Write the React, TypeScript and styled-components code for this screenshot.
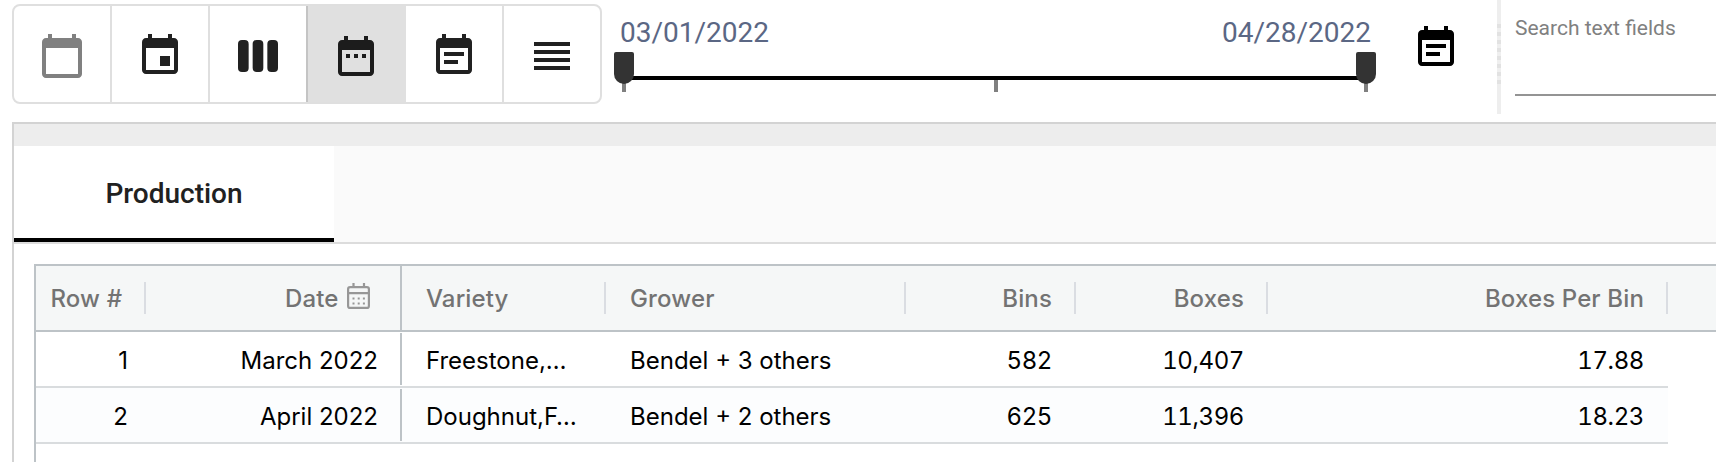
import React from "react";
import styled, { createGlobalStyle } from "styled-components";

const GlobalStyle = createGlobalStyle`
  * { box-sizing: border-box; }
  body { margin: 0; background: #fff; overflow: hidden; font-family: Roboto, sans-serif; }
`;

const Page = styled.div`
  width: 1716px;
  height: 462px;
  overflow: hidden;
  display: flex;
  flex-direction: column;
  padding-left: 12px;
`;

const Toolbar = styled.div`
  display: flex;
  flex: none;
  height: 122px;
`;

const ToggleGroup = styled.div`
  display: flex;
  width: 590px;
  height: 100px;
  margin-top: 4px;
  border: 2px solid #dfdfdf;
  border-radius: 8px;
`;

const Toggle = styled.button<{ $selected?: boolean; $muted?: boolean; $edge?: string }>`
  flex: none;
  width: 98px;
  height: 96px;
  padding: 26px 0 0 24px;
  border: 0;
  border-right: 2px solid ${(p) => p.$edge ?? "#dfdfdf"};
  background: ${(p) => (p.$selected ? "#e0e0e0" : "transparent")};
  color: ${(p) => (p.$selected ? "#1c1c1c" : p.$muted ? "#808080" : "#212121")};
  display: flex;
  align-items: flex-start;
  &:last-child { border-right: 0; width: 96px; }
`;

const Icon = styled.svg`
  width: 48px;
  height: 48px;
  flex: none;
  fill: currentColor;
`;

const RangePicker = styled.div`
  width: 742px;
  margin-left: 22px;
`;

const RangeLabels = styled.div`
  display: flex;
  justify-content: space-between;
  height: 52px;
  padding: 17px 0 0;
  margin: 0 -5px 0 -4px;
  font-size: 28px;
  line-height: 32px;
  color: #5b6784;
`;

const Slider = styled.div`
  position: relative;
  height: 40px;
`;

const Rail = styled.div`
  position: absolute;
  left: 0;
  right: 0;
  top: 24px;
  height: 4px;
  background: #000;
`;

const Tick = styled.div<{ $at: number }>`
  position: absolute;
  left: calc(${(p) => p.$at}% - 2px);
  top: 28px;
  width: 4px;
  height: 12px;
  background: #808080;
`;

const Thumb = styled.div<{ $at: number }>`
  position: absolute;
  left: calc(${(p) => p.$at}% - 10px);
  top: 0;
  width: 20px;
  height: 32px;
  border-radius: 2px 2px 10px 10px;
  background: #333;
`;

const CalendarButton = styled.button`
  margin: 24px 0 0 46.4px;
  padding: 0;
  border: 0;
  height: 48px;
  background: none;
  color: #000;
`;

const Gutter = styled.div`
  width: 4px;
  height: 114px;
  margin-left: 36.6px;
  padding-top: 24px;
  background: #eee;
`;

const GutterGrip = styled.div`
  height: 60px;
  background: repeating-linear-gradient(#e2e2e2 0 4px, #efefef 4px 8px);
`;

const SearchField = styled.label`
  flex: 1;
  height: 96px;
  margin-left: 14px;
  padding-top: 14px;
  border-bottom: 2px solid #949494;
  color: #808080;
  font-size: 21px;
  line-height: 28px;
`;

const Panel = styled.main`
  flex: 1;
  border: 2px solid #d3d3d3;
  border-width: 2px 0 0 2px;
`;

const PanelBar = styled.div`
  height: 22px;
  background: #ededed;
`;

const TabStrip = styled.div`
  display: flex;
  height: 98px;
  background: #fafafa;
  border-bottom: 2px solid #dcdcdc;
`;

const Tab = styled.div`
  width: 320px;
  border-bottom: 4px solid #000;
  background: #fff;
  color: #212121;
  font-size: 28px;
  font-weight: 500;
  line-height: 95px;
  text-align: center;
`;

const Grid = styled.div`
  height: 240px;
  margin: 20px 0 0 20px;
  border: 2px solid #bdc3c7;
  border-width: 2px 0 0 2px;
  font-family: Inter, sans-serif;
  font-size: 24px;
`;

const HeaderRow = styled.div`
  display: flex;
  height: 66px;
  border-bottom: 2px solid #bdc3c7;
  background: #f5f7f7;
  color: #737373;
  font-weight: 550;
  letter-spacing: 0.14px;
`;

const Row = styled.div<{ $odd?: boolean }>`
  display: flex;
  width: 1632px;
  height: 56px;
  border-bottom: 2px solid #d9dcde;
  background: ${(p) => (p.$odd ? "#fcfdfe" : "#fff")};
  color: #000;
`;

type CellProps = { $w: number; $right?: boolean; $pad?: number; $pinned?: boolean; $numeric?: boolean };

const Cell = styled.div<CellProps>`
  flex: none;
  display: flex;
  align-items: center;
  justify-content: ${(p) => (p.$right ? "flex-end" : "flex-start")};
  width: ${(p) => p.$w}px;
  margin: ${(p) => (p.$pinned ? "1px 0" : "0")};
  padding: 2px ${(p) => p.$pad ?? 22}px 0 24px;
  border-right: ${(p) => (p.$pinned ? "2px solid #bdc3c7" : "0")};
  font-variant-numeric: ${(p) => (p.$numeric ? "tabular-nums" : "normal")};
  letter-spacing: ${(p) => (p.$numeric ? "-0.4px" : "0")};
  white-space: nowrap;
`;

const HeaderCell = styled(Cell)<{ $left?: number }>`
  margin: 0;
  padding-top: 0;
  padding-left: ${(p) => p.$left ?? 24}px;
  letter-spacing: inherit;
`;

const Resizer = styled.span`
  flex: none;
  width: 2px;
  height: 32px;
  margin: 16px 0;
  background: #dadde2;
`;

const DateIcon = styled.svg`
  flex: none;
  width: 23px;
  height: 26px;
  margin: -4px 0 0 8.5px;
  fill: none;
  stroke: #979797;
  stroke-width: 2.2;
`;

const paths = {
  today: "M20 3h-1V1h-2v2H7V1H5v2H4c-1.1 0-2 .9-2 2v16c0 1.1.9 2 2 2h16c1.1 0 2-.9 2-2V5c0-1.1-.9-2-2-2zm0 18H4V8h16v13z",
  event: "M17 12h-5v5h5v-5zM16 1v2H8V1H6v2H5c-1.11 0-1.99.9-1.99 2L3 19c0 1.1.89 2 2 2h14c1.1 0 2-.9 2-2V5c0-1.1-.9-2-2-2h-1V1h-2zm3 18H5V8h14v11z",
  range: "M9 11H7v2h2v-2zm4 0h-2v2h2v-2zm4 0h-2v2h2v-2zm2-7h-1V2h-2v2H8V2H6v2H5c-1.11 0-1.99.9-1.99 2L3 20c0 1.1.89 2 2 2h14c1.1 0 2-.9 2-2V6c0-1.1-.9-2-2-2zm0 16H5V9h14v11z",
  note: "M17 10H7v2h10v-2zm2-7h-1V1h-2v2H8V1H6v2H5c-1.11 0-1.99.9-1.99 2L3 19c0 1.1.89 2 2 2h14c1.1 0 2-.9 2-2V5c0-1.1-.9-2-2-2zm0 16H5V8h14v11zm-5-5H7v2h7v-2z",
  reorder: "M3 15h18v-2H3v2zm0 4h18v-2H3v2zm0-8h18V9H3v2zm0-6v2h18V5H3z",
};

const Glyph = ({ d }: { d: string }) => (
  <Icon viewBox="0 0 24 24"><path d={d} /></Icon>
);

const rows = [
  ["1", "March 2022", "Freestone,…", "Bendel + 3 others", "582", "10,407", "17.88"],
  ["2", "April 2022", "Doughnut,F…", "Bendel + 2 others", "625", "11,396", "18.23"],
];

export default function App() {
  return (
    <Page>
      <GlobalStyle />
      <Toolbar>
        <ToggleGroup>
          <Toggle $muted><Glyph d={paths.today} /></Toggle>
          <Toggle><Glyph d={paths.event} /></Toggle>
          <Toggle $edge="#c4c4c4">
            <Icon viewBox="0 0 24 24">
              <rect x="2" y="4" width="5.33" height="16" rx="2" />
              <rect x="9.33" y="4" width="5.33" height="16" rx="2" />
              <rect x="16.67" y="4" width="5.33" height="16" rx="2" />
            </Icon>
          </Toggle>
          <Toggle $selected $edge="#e0e0e0"><Glyph d={paths.range} /></Toggle>
          <Toggle><Glyph d={paths.note} /></Toggle>
          <Toggle><Glyph d={paths.reorder} /></Toggle>
        </ToggleGroup>
        <RangePicker>
          <RangeLabels><span>03/01/2022</span><span>04/28/2022</span></RangeLabels>
          <Slider>
            <Rail />
            <Tick $at={0} />
            <Tick $at={50.13} />
            <Tick $at={100} />
            <Thumb $at={0} />
            <Thumb $at={100} />
          </Slider>
        </RangePicker>
        <CalendarButton><Glyph d={paths.note} /></CalendarButton>
        <Gutter><GutterGrip /></Gutter>
        <SearchField>Search text fields</SearchField>
      </Toolbar>
      <Panel>
        <PanelBar />
        <TabStrip><Tab>Production</Tab></TabStrip>
        <Grid>
          <HeaderRow>
            <HeaderCell $w={108} $left={14.5}>Row #</HeaderCell>
            <Resizer />
            <HeaderCell $w={256} $right $pad={30} $pinned>
              Date
              <DateIcon viewBox="0 0 23 26">
                <rect x="1.1" y="4.1" width="20.8" height="20.8" rx="2" />
                <path d="M1 10.2h21M6.5 0v4M17 0v4" />
                <path d="M5.5 15.5h13M5.5 20.5h13" strokeDasharray="2 3.2" />
              </DateIcon>
            </HeaderCell>
            <HeaderCell $w={202}>Variety</HeaderCell><Resizer />
            <HeaderCell $w={298}>Grower</HeaderCell><Resizer />
            <HeaderCell $w={168} $right>Bins</HeaderCell><Resizer />
            <HeaderCell $w={190} $right>Boxes</HeaderCell><Resizer />
            <HeaderCell $w={398} $right>Boxes Per Bin</HeaderCell><Resizer />
          </HeaderRow>
          {rows.map((r, i) => (
            <Row key={r[0]} $odd={i === 1}>
              <Cell $w={110} $right $pad={18}>{r[0]}</Cell>
              <Cell $w={256} $right $pinned>{r[1]}</Cell>
              <Cell $w={204}>{r[2]}</Cell>
              <Cell $w={300}>{r[3]}</Cell>
              <Cell $w={170} $right $pad={24} $numeric>{r[4]}</Cell>
              <Cell $w={192} $right $pad={24} $numeric>{r[5]}</Cell>
              <Cell $w={400} $right $pad={24} $numeric>{r[6]}</Cell>
            </Row>
          ))}
        </Grid>
      </Panel>
    </Page>
  );
}
